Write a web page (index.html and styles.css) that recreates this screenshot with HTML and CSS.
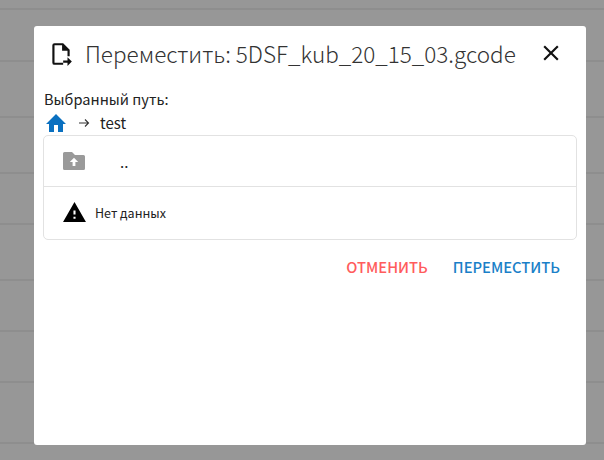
FILE: index.html
```html
<!DOCTYPE html>
<html lang="ru">
<head>
<meta charset="utf-8">
<title>Переместить</title>
<link rel="stylesheet" href="styles.css">
</head>
<body>
<div class="backdrop">
  <div class="row r1"></div>
  <div class="row r2"></div>
  <div class="row r3"></div>
  <div class="row r4"></div>
  <div class="row r5"></div>
  <div class="row r6"></div>
  <div class="row r7"></div>
  <div class="row r8"></div>
  <div class="row r9"></div>
</div>
<main class="dialog">
  <header class="head">
    <svg class="file-icon" viewBox="0 0 24 24"><path fill="#111" d="M14 2H6a2 2 0 0 0-2 2v16a2 2 0 0 0 2 2h8v-2H6V4h7v5h5v5h2V8zM18 15v3h-4v2h4v3l4-4z"/></svg>
    <h1 class="title">Переместить: 5DSF_kub_20_15_03.gcode</h1>
    <svg class="close" viewBox="0 0 24 24"><path fill="#111" d="M19 6.410 17.590 5 12 10.590 6.410 5 5 6.410 10.590 12 5 17.590 6.410 19 12 13.410 17.590 19 19 17.590 13.410 12z"/></svg>
  </header>
  <div class="path-label">Выбранный путь:</div>
  <div class="path">
    <svg class="home" viewBox="0 0 24 24"><path fill="#0a70c0" d="M10 21v-7h4v7h5v-8h3L12 3 2 13h3v8z"/></svg>
    <svg class="arrow" viewBox="0 0 12 12"><path fill="none" stroke="#333" stroke-width="1.100" d="M1 6h9.500M7 2.500 10.500 6 7 9.500"/></svg>
    <span class="crumb">test</span>
  </div>
  <div class="list">
    <div class="item up">
      <svg class="folder" viewBox="0 0 24 20"><path fill="#9a9a9a" d="M10 1H2.500A1.500 1.500 0 0 0 1 2.500v15A1.500 1.500 0 0 0 2.500 19h19a1.500 1.500 0 0 0 1.500-1.500v-12A1.500 1.500 0 0 0 21.500 4H13z"/><path fill="#fff" d="M12 6.800 7.800 11h2.800v4h2.800v-4h2.800z"/></svg>
      <span class="dots">..</span>
    </div>
    <div class="item empty">
      <svg class="warn" viewBox="0 0 24 24"><path fill="#000" d="M1 21h22L12 2zm12-3h-2v-2h2zm0-4h-2v-4h2z"/></svg>
      <span class="empty-text">Нет данных</span>
    </div>
  </div>
  <div class="actions">
    <span class="btn cancel">ОТМЕНИТЬ</span>
    <span class="btn move">ПЕРЕМЕСТИТЬ</span>
  </div>
</main>
</body>
</html>
```
FILE: styles.css
```css
* { box-sizing: border-box; }
html, body { margin: 0; height: 100%; }
body {
  width: 604px;
  height: 460px;
  background: #979797;
  font-family: "Noto Sans CJK JP", "Noto Sans", sans-serif;
  padding: 26px 18px 15px 34px;
  overflow: hidden;
  position: relative;
}
.backdrop { position: absolute; inset: 0; }
.row { position: absolute; left: 0; right: 0; height: 2px; background: #8e8e8e; }
.r1 { top: 8px; }
.r2 { top: 60px; }
.r3 { top: 116px; }
.r4 { top: 172px; }
.r5 { top: 223px; }
.r6 { top: 279px; }
.r7 { top: 330px; }
.r8 { top: 381px; }
.r9 { top: 442px; }
.dialog {
  position: relative;
  width: 552px;
  height: 419px;
  background: #fff;
  border-radius: 3px;
  padding: 0 9px;
  color: #222;
}
.head { display: flex; align-items: center; height: 56px; padding-left: 5px; }
.file-icon { width: 26px; height: 26px; flex: none; }
.title { margin: 0 0 3px 11px; font-size: 22.5px; font-weight: 300; color: #333; flex: 1; white-space: nowrap; line-height: 40px; }
.close { width: 26px; height: 26px; flex: none; margin: 0 13px 2px 0; }
.path-label { font-size: 14.6px; line-height: 20px; margin: 7px 0 3px 1px; }
.path { display: flex; align-items: center; height: 21px; font-size: 15px; }
.home { width: 24px; height: 24px; flex: none; margin-left: 1px; }
.arrow { width: 12px; height: 12px; margin-left: 10px; flex: none; }
.crumb { margin-left: 10px; }
.list { border: 1px solid #e2e2e2; border-radius: 5px; margin-top: 2px; }
.item { display: flex; align-items: center; }
.up { height: 51px; border-bottom: 1px solid #e2e2e2; }
.empty { height: 52px; padding-bottom: 2px; }
.folder { width: 24px; height: 20px; margin-left: 18px; flex: none; }
.dots { margin-left: 34px; font-size: 15px; }
.warn { width: 25px; height: 25px; margin-left: 18px; flex: none; }
.empty-text { font-size: 12.5px; margin-left: 8px; }
.actions { display: flex; justify-content: flex-end; gap: 25px; margin-top: 17px; padding-right: 17px; }
.btn { font-size: 14.75px; font-weight: 500; line-height: 20px; }
.cancel { color: #ff5c5c; }
.move { color: #1a7fc8; }
```
